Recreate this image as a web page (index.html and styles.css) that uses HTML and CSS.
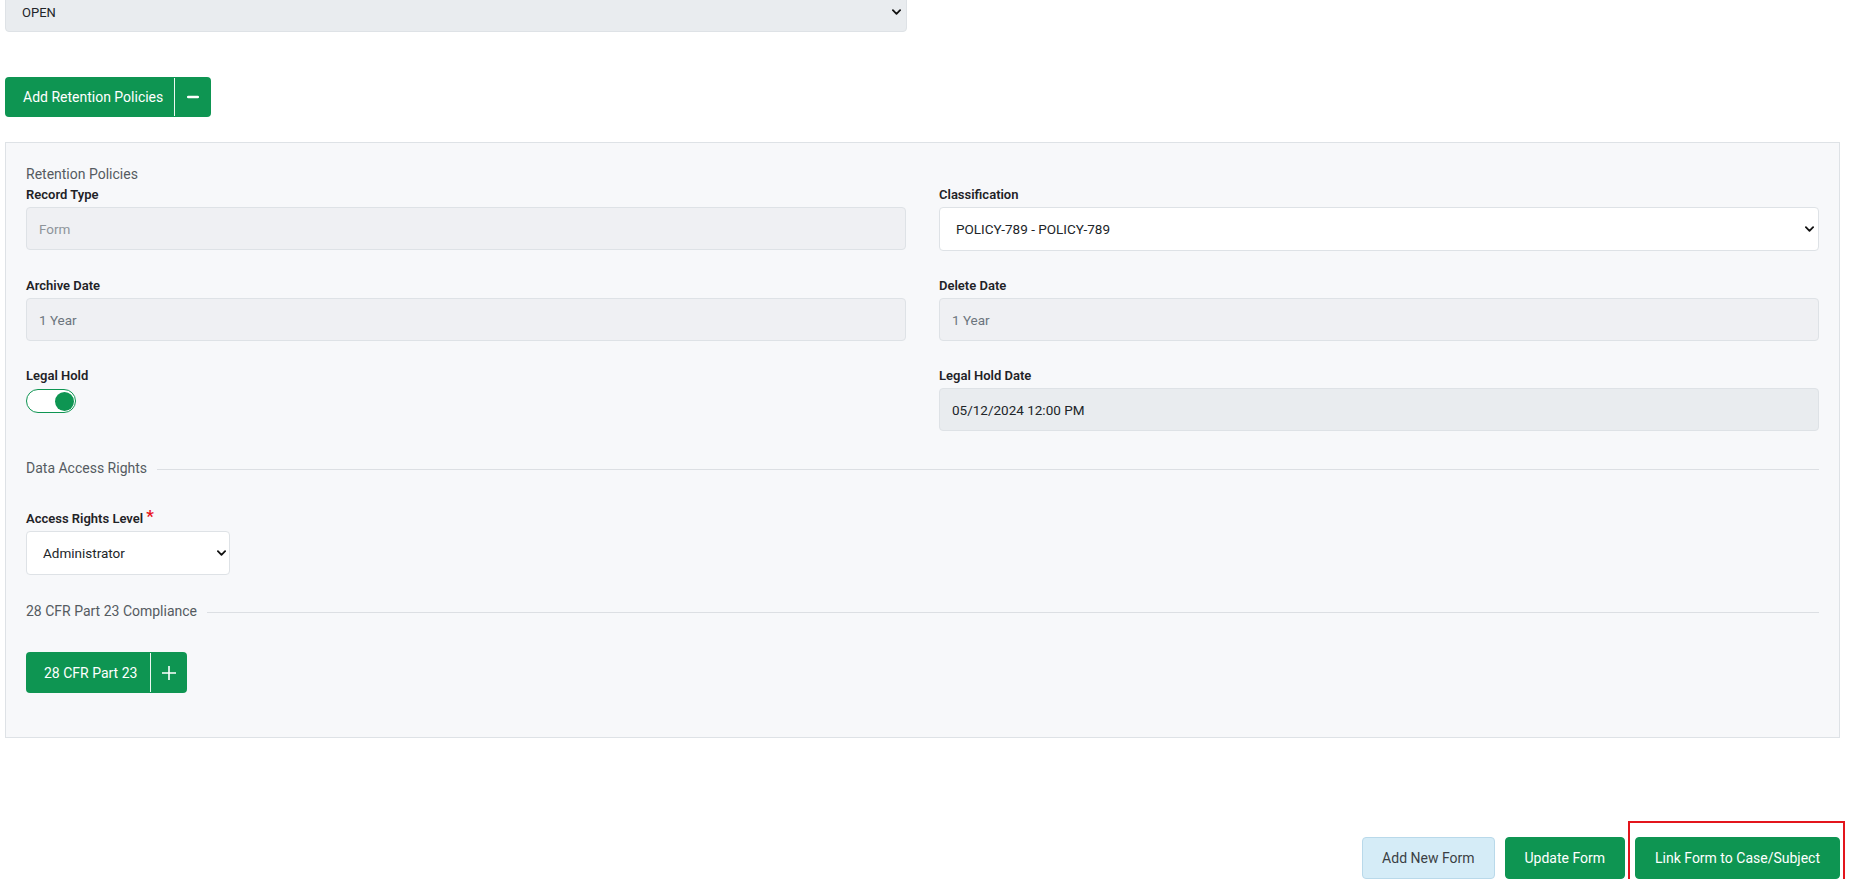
FILE: index.html
```html
<!DOCTYPE html>
<html lang="en">
<head>
<meta charset="utf-8">
<title>Retention Policies</title>
<link rel="stylesheet" href="styles.css">
</head>
<body>
<div class="page">
  <div class="top-row">
    <div class="select-wrap">
      <select class="select select--muted select--top"><option>OPEN</option></select>
      <svg class="chevron chevron--top" viewBox="0 0 10 6" aria-hidden="true"><path d="M1 1l4 4 4-4" fill="none" stroke="#111" stroke-width="2" stroke-linecap="round" stroke-linejoin="round"/></svg>
    </div>
  </div>

  <div class="toolbar">
    <button class="split-btn split-btn--tall" type="button">
      <span class="split-btn__label">Add Retention Policies</span>
      <span class="split-btn__icon">
        <svg width="12" height="4" viewBox="0 0 12 4" aria-hidden="true"><path d="M1.2 2h9.6" stroke="#fff" stroke-width="2.6" stroke-linecap="round"/></svg>
      </span>
    </button>
  </div>

  <section class="panel">
    <div class="panel__title">Retention Policies</div>
    <div class="field-grid">
      <div class="field">
        <label class="field__label">Record Type</label>
        <input class="input input--readonly input--placeholder" value="Form" readonly>
      </div>
      <div class="field">
        <label class="field__label">Classification</label>
        <div class="select-wrap">
          <select class="select select--field"><option>POLICY-789 - POLICY-789</option></select>
          <svg class="chevron" viewBox="0 0 10 6" aria-hidden="true"><path d="M1 1l4 4 4-4" fill="none" stroke="#111" stroke-width="2" stroke-linecap="round" stroke-linejoin="round"/></svg>
        </div>
      </div>
      <div class="field">
        <label class="field__label">Archive Date</label>
        <input class="input input--readonly" value="1 Year" readonly>
      </div>
      <div class="field">
        <label class="field__label">Delete Date</label>
        <input class="input input--readonly" value="1 Year" readonly>
      </div>
      <div class="field">
        <label class="field__label">Legal Hold</label>
        <span class="switch" role="switch" aria-checked="true"><span class="switch__knob"></span></span>
      </div>
      <div class="field">
        <label class="field__label">Legal Hold Date</label>
        <input class="input input--date" value="05/12/2024 12:00 PM" readonly>
      </div>
    </div>

    <div class="section-head section-head--access">
      <span class="section-head__text">Data Access Rights</span>
      <span class="section-head__rule"></span>
    </div>

    <div class="field field--access">
      <label class="field__label">Access Rights Level<span class="required">*</span></label>
      <div class="select-wrap select-wrap--small">
        <select class="select select--field"><option>Administrator</option></select>
        <svg class="chevron" viewBox="0 0 10 6" aria-hidden="true"><path d="M1 1l4 4 4-4" fill="none" stroke="#111" stroke-width="2" stroke-linecap="round" stroke-linejoin="round"/></svg>
      </div>
    </div>

    <div class="section-head section-head--cfr">
      <span class="section-head__text">28 CFR Part 23 Compliance</span>
      <span class="section-head__rule"></span>
    </div>

    <div class="cfr-row">
      <button class="split-btn split-btn--cfr" type="button">
        <span class="split-btn__label">28 CFR Part 23</span>
        <span class="split-btn__icon">
          <svg width="16" height="16" viewBox="0 0 16 16" aria-hidden="true"><path d="M8 1v14M1 8h14" stroke="#fff" stroke-width="1.6"/></svg>
        </span>
      </button>
    </div>
  </section>

  <div class="actions">
    <button class="btn btn--light" type="button">Add New Form</button>
    <button class="btn btn--green" type="button">Update Form</button>
    <span class="highlight">
      <button class="btn btn--green btn--wide" type="button">Link Form to Case/Subject</button>
      <span class="highlight__box"></span>
    </span>
  </div>
</div>
</body>
</html>
```

FILE: styles.css
```css
* { box-sizing: border-box; }

html, body {
  margin: 0;
  background: #ffffff;
  overflow: hidden;
}

body {
  font-family: Roboto, "Liberation Sans", Arial, sans-serif;
  font-size: 14px;
  color: #212529;
}

.page {
  width: 1835px;
  margin-left: 5px;
}

/* top select */
.top-row {
  display: grid;
  grid-template-columns: 1fr 1fr;
  column-gap: 32px;
  margin-top: -8px;
}

.select-wrap {
  position: relative;
}

.select-wrap--small {
  width: 204px;
}

.select {
  -webkit-appearance: none;
  appearance: none;
  display: block;
  width: 100%;
  border: 1px solid #dee2e6;
  border-radius: 4px;
  background: #ffffff;
  font-family: inherit;
  font-size: 13.5px;
  color: #212529;
  padding: 0 28px 0 16px;
  outline: none;
}

.select--top {
  height: 40px;
  font-size: 13px;
  padding-left: 16px;
}

.select--muted {
  background: #e9ecef;
}

.select--field {
  height: 44px;
}

.chevron {
  position: absolute;
  right: 5px;
  top: 50%;
  width: 9px;
  height: 6px;
  margin-top: -3px;
  pointer-events: none;
}

.chevron--top {
  right: 6px;
}

.select-wrap--small .chevron {
  right: 4px;
}

/* split buttons */
.toolbar {
  margin-top: 45px;
}

.split-btn {
  display: inline-flex;
  align-items: stretch;
  padding: 0;
  border: none;
  border-radius: 4px;
  background: #0e9552;
  color: #ffffff;
  font-family: inherit;
  font-size: 14px;
  cursor: pointer;
}

.split-btn--tall { height: 40px; }
.split-btn--cfr { height: 41px; }

.split-btn__label {
  display: flex;
  align-items: center;
  padding: 0 11px 0 18px;
}

.split-btn--cfr .split-btn__label {
  padding-right: 13px;
}

.split-btn__icon {
  display: flex;
  align-items: center;
  justify-content: center;
  width: 37px;
  border-left: 1px solid rgba(255, 255, 255, 0.92);
  margin: 1px 0;
}

/* panel */
.panel {
  margin-top: 25px;
  border: 1px solid #dee2e6;
  background: #f7f8fa;
  padding: 21px 20px 44px 20px;
}

.panel__title {
  font-size: 14px;
  line-height: 20px;
  color: #555b61;
  margin-bottom: 3px;
}

.field-grid {
  display: grid;
  grid-template-columns: 1fr 1fr;
  column-gap: 33px;
  row-gap: 27px;
}

.field {
  display: flex;
  flex-direction: column;
  align-items: flex-start;
}

.field > .input,
.field > .select-wrap:not(.select-wrap--small) {
  width: 100%;
}

.field__label {
  font-size: 13px;
  line-height: 16px;
  font-weight: 600;
  color: #1f2327;
  margin-bottom: 4px;
}

.input {
  display: block;
  height: 43px;
  border: 1px solid #dee2e6;
  border-radius: 4px;
  padding: 0 12px;
  font-family: inherit;
  font-size: 13.5px;
  outline: none;
}

.input--readonly {
  background: #eff0f3;
  color: #6c757d;
}

.input--placeholder {
  color: #8e949a;
}

.input--date {
  background: #e9ecef;
  color: #212529;
}

/* switch */
.switch {
  display: inline-flex;
  align-items: center;
  justify-content: flex-end;
  width: 50px;
  height: 24px;
  margin-top: 1px;
  border: 1.5px solid #0e9552;
  border-radius: 12px;
  background: #ffffff;
  padding: 0 1.5px;
}

.switch__knob {
  width: 19px;
  height: 19px;
  border-radius: 50%;
  background: #0e9552;
}

/* section heads */
.section-head {
  display: flex;
  align-items: center;
  gap: 10px;
  font-size: 14px;
  line-height: 20px;
  color: #555b61;
}

.section-head__rule {
  flex: 1;
  height: 1px;
  background: #dcdfe3;
  margin-top: 2px;
}

.section-head--access { margin-top: 27px; }
.section-head--cfr { margin-top: 26px; }

.field--access {
  margin-top: 33px;
}

.required {
  color: #e8141c;
  font-size: 17px;
  line-height: 10px;
  margin-left: 3px;
  position: relative;
  top: -1px;
}

.cfr-row {
  margin-top: 31px;
}

/* bottom actions */
.actions {
  display: flex;
  justify-content: flex-end;
  gap: 10px;
  margin-top: 99px;
}

.btn {
  height: 42px;
  padding: 0 19px;
  border-radius: 4px;
  font-family: inherit;
  font-size: 14px;
  cursor: pointer;
}

.btn--wide {
  padding: 0 19px;
}

.btn--light {
  background: #d5ecf7;
  border: 1px solid #b9d9ea;
  color: #3b3f44;
}

.btn--green {
  background: #0e9552;
  border: 1px solid #0e9552;
  color: #ffffff;
}

.highlight {
  position: relative;
  display: inline-flex;
}

.highlight__box {
  position: absolute;
  left: -7px;
  right: -5px;
  top: -16px;
  bottom: -6px;
  border: 2px solid #e3151c;
  pointer-events: none;
}
```
